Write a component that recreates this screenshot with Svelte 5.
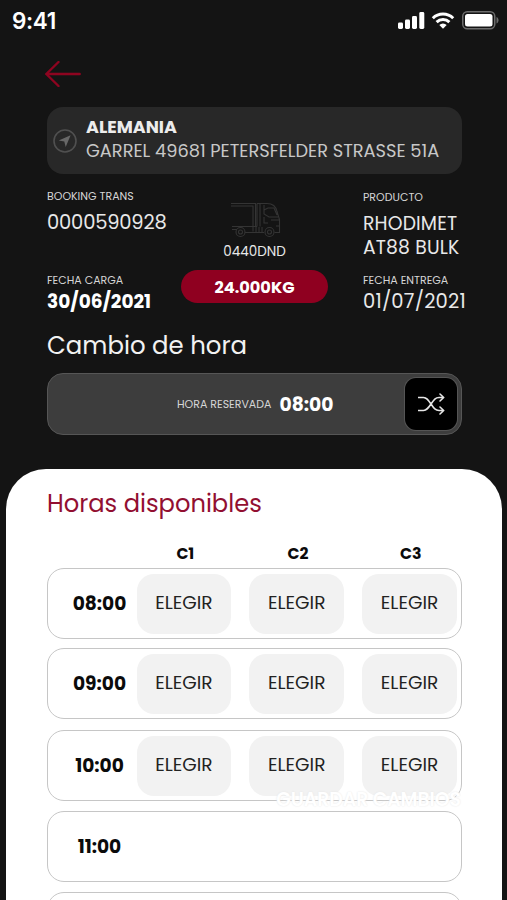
<script>
  const columns = ['C1', 'C2', 'C3'];

  const slots = [
    { hour: '08:00', free: true },
    { hour: '09:00', free: true },
    { hour: '10:00', free: true },
    { hour: '11:00', free: false },
    { hour: '', free: false }
  ];

  let reserved = $state('08:00');
</script>

<div class="screen">
  <div class="status">
    <span class="clock">9:41</span>
    <div class="status-icons">
      <svg class="signal" viewBox="0 0 27 17" aria-hidden="true">
        <rect x="0" y="10.5" width="5" height="6.5" rx="1.4" />
        <rect x="7" y="7.5" width="5" height="9.5" rx="1.4" />
        <rect x="14" y="4" width="5" height="13" rx="1.4" />
        <rect x="21.3" y="0" width="5" height="17" rx="1.4" />
      </svg>
      <svg class="wifi" viewBox="0 0 24 17" aria-hidden="true">
        <path class="arc" d="M1.8 6.2a14.6 14.6 0 0 1 20.4 0" />
        <path class="arc" d="M5.6 10.2a9.2 9.2 0 0 1 12.8 0" />
        <path d="M8.3 13a5.3 5.3 0 0 1 7.4 0L12 16.8z" />
      </svg>
      <svg class="battery" viewBox="0 0 37 19" aria-hidden="true">
        <rect class="case" x=".75" y=".75" width="32" height="17" rx="4.5" />
        <rect x="3" y="3" width="27.5" height="12.5" rx="2.5" />
        <path class="nub" d="M34.5 6v6.5c1.5-.5 2-2 2-3.2s-.5-2.8-2-3.3z" />
      </svg>
    </div>
  </div>

  <header>
    <button class="back" type="button" aria-label="Volver">
      <svg viewBox="0 0 36 26" aria-hidden="true"><path d="M13.5 1 1.3 13l12.2 12M1.3 13h33.4" /></svg>
    </button>

    <div class="address">
      <svg viewBox="0 0 24 24" aria-hidden="true">
        <circle cx="12" cy="12" r="11" />
        <path d="M17.6 6.2 5.7 11.4l5.6 1.1 1.4 5.6z" />
      </svg>
      <div class="address-text">
        <strong>ALEMANIA</strong>
        <span>GARREL 49681 PETERSFELDER STRASSE 51A</span>
      </div>
    </div>

    <div class="details">
      <div class="detail booking">
        <small>BOOKING TRANS</small>
        <span class="number">0000590928</span>
      </div>
      <div class="load">
        <svg class="truck" viewBox="0 0 50 36" aria-hidden="true">
          <path d="M0 1.5h24.5v22.5M0 4h22v20M1 24.5h25M1 27.5h5M14 30.5h19M26 1.5v23M29 1.5v23M26 1.5h10c6 0 9 3 10 8l2.5 8v13h-5M33 3v9l5 3h9M33 8l4-2h6l3 7M33 15v6h4M22 24.5v5M25 25v5M28 25v5M31 25v5M40 18h8M45 24h3" />
          <circle cx="9.5" cy="30" r="4.5" /><circle cx="9.5" cy="30" r="2" />
          <circle cx="38.5" cy="30" r="4.5" /><circle cx="38.5" cy="30" r="2" />
        </svg>
        <span class="plate">0440DND</span>
        <strong class="weight">24.000KG</strong>
      </div>
      <div class="detail product">
        <small>PRODUCTO</small>
        <span>RHODIMET<br />AT88 BULK</span>
      </div>
      <div class="detail">
        <small>FECHA CARGA</small>
        <strong>30/06/2021</strong>
      </div>
      <div class="detail delivery">
        <small>FECHA ENTREGA</small>
        <span class="date">01/07/2021</span>
      </div>
    </div>

    <h1>Cambio de hora</h1>

    <div class="reserved">
      <small>HORA RESERVADA</small>
      <strong>{reserved}</strong>
      <button type="button" aria-label="Cambiar hora">
        <svg viewBox="0 0 27 22" aria-hidden="true">
          <path d="M.5 4.5h5c3 0 4.5 2 7.5 6.5s4.5 6.500 8 6.500h4.500M.5 17.500h5c3 0 4.500-2 7.500-6.500s4.500-6.500 8-6.500h4.500M22 1l3.700 3.500L22 8M22 14l3.700 3.500L22 21" />
        </svg>
      </button>
    </div>
  </header>

  <main>
    <h2>Horas disponibles</h2>
    <div class="heads">
      {#each columns as column}
        <strong>{column}</strong>
      {/each}
    </div>
    <div class="slots">
      {#each slots as slot}
        <div class="slot">
          <strong>{slot.hour}</strong>
          {#if slot.free}
            {#each columns as column}
              <button type="button" aria-label="{slot.hour} {column}" onclick={() => (reserved = slot.hour)}>ELEGIR</button>
            {/each}
          {/if}
        </div>
      {/each}
    </div>
    <div class="save">GUARDAR CAMBIOS</div>
  </main>
</div>

<style>
  :global(body) { background: #141414; }
  .screen { width: 507px; height: 900px; box-sizing: border-box; overflow: hidden; background: #141414; color: #e8e8e8; font-family: Poppins, Inter, sans-serif; display: flex; flex-direction: column; }
  button { border: 0; padding: 0; font: inherit; cursor: pointer; }
  svg { display: block; flex: none; }
  strong { font-weight: 700; }
  small { font-size: 11px; line-height: 14px; color: #d6d6d6; white-space: nowrap; }

  .status { height: 41px; flex: none; padding: 0 8px 0 12px; display: flex; align-items: center; justify-content: space-between; }
  .clock { font-family: Inter, sans-serif; font-size: 22.5px; font-weight: 600; color: #fff; letter-spacing: -.4px; }
  .status-icons { display: flex; align-items: center; fill: #fff; }
  .signal { width: 27px; height: 17px; margin-right: 6px; }
  .wifi { width: 24px; height: 17px; margin-right: 7px; }
  .arc { fill: none; stroke: #fff; stroke-width: 3; }
  .battery { width: 37px; height: 19px; }
  .case { fill: none; stroke: #6c6c6c; stroke-width: 1.5; }
  .nub { fill: #6c6c6c; }

  header { padding: 20px 45px 0 47px; flex: none; }
  .back { display: block; margin-left: -2px; background: none; }
  .back svg { width: 36px; height: 26px; fill: none; stroke: #8e0420; stroke-width: 2.4; stroke-linecap: round; stroke-linejoin: round; }

  .address { height: 67px; margin-top: 20px; padding-left: 6px; border-radius: 16px; background: #282828; display: flex; align-items: center; gap: 9px; }
  .address svg { width: 24px; height: 24px; }
  .address circle { fill: none; stroke: #505050; stroke-width: 1.6; }
  .address path { fill: #686868; }
  .address-text { display: flex; flex-direction: column; margin-top: -4px; font-size: 17.5px; line-height: 23px; white-space: nowrap; }
  .address-text strong { color: #ececec; }
  .address-text span { color: #c8c8c8; font-size: 17.8px; }

  .details { margin-top: 15px; display: grid; grid-template-columns: 134px 147px 1fr; grid-template-rows: 84px 40px; }
  .detail { display: flex; flex-direction: column; gap: 3px; font-size: 18.8px; line-height: 24px; white-space: nowrap; }
  .detail strong { font-size: 18.5px; color: #fff; }
  .booking { gap: 8px; }
  .number { font-size: 19.5px; letter-spacing: -.2px; }
  .product { padding: 1px 0 0 35px; gap: 8px; letter-spacing: .15px; }
  .product small { letter-spacing: 0; }
  .delivery { padding-left: 35px; }
  .date { font-size: 19.5px; letter-spacing: .2px; }
  .load { grid-row: span 2; display: flex; flex-direction: column; align-items: center; }
  .truck { width: 50px; height: 36px; margin: 13px 0 5px 2px; fill: none; stroke: #343434; stroke-width: 1.1; }
  .plate { font-size: 13.5px; line-height: 18px; }
  .weight { align-self: stretch; height: 33px; margin-top: 9px; border-radius: 17px; background: #8f0020; color: #fff; font-size: 16.2px; line-height: 35px; text-align: center; }

  h1, h2 { margin: 0; font-weight: 400; font-size: 24.4px; line-height: 32px; }
  h1 { margin-top: 17px; color: #f2f2f2; }
  .reserved { height: 62px; margin-top: 11px; box-sizing: border-box; border: 1.5px solid #565656; border-radius: 16px; background: #3d3d3d; display: flex; align-items: center; padding: 0 4px 0 129px; }
  .reserved strong { margin-left: 8px; font-size: 18.7px; color: #fff; }
  .reserved button { width: 52px; height: 52px; margin-left: auto; border-radius: 11px; background: #000; box-shadow: 0 0 0 1px #555; display: grid; place-items: center; }
  .reserved svg { width: 27px; height: 22px; fill: none; stroke: #e6e6e6; stroke-width: 1.6; stroke-linecap: round; stroke-linejoin: round; }

  main { position: relative; flex: 1; margin: 34px 5px 0 6px; padding: 19px 40px 0 41px; background: #fff; border-radius: 40px 40px 0 0; color: #0b0b0b; }
  h2 { color: #920f31; font-size: 24.2px; }
  .heads { display: flex; gap: 18px; margin: 25px 4px 5px 91px; font-size: 15.7px; line-height: 18px; }
  .heads strong { flex: 1; text-align: center; }
  .slot { height: 71px; box-sizing: border-box; border: 1.5px solid #c6c6c6; border-radius: 17px; margin-bottom: 10px; padding-right: 4px; display: flex; align-items: center; gap: 18px; }
  .slot:first-child { margin-bottom: 9px; }
  .slot:nth-child(2) { margin-bottom: 11px; }
  .slot strong { width: 103px; margin-right: -32.5px; text-align: center; font-size: 18.6px; line-height: 24px; }
  .slot button { flex: 1; height: 60px; border-radius: 17px; background: #f2f2f2; color: #222; font-size: 18.6px; line-height: 58px; padding-bottom: 2px; }
  /* white label lying over the list edge */
  .save { position: absolute; top: 321px; right: 41px; font-size: 18.8px; font-weight: 600; line-height: 20px; color: #fff; text-shadow: 0 0 2px #e4e4e4; white-space: nowrap; }
</style>
